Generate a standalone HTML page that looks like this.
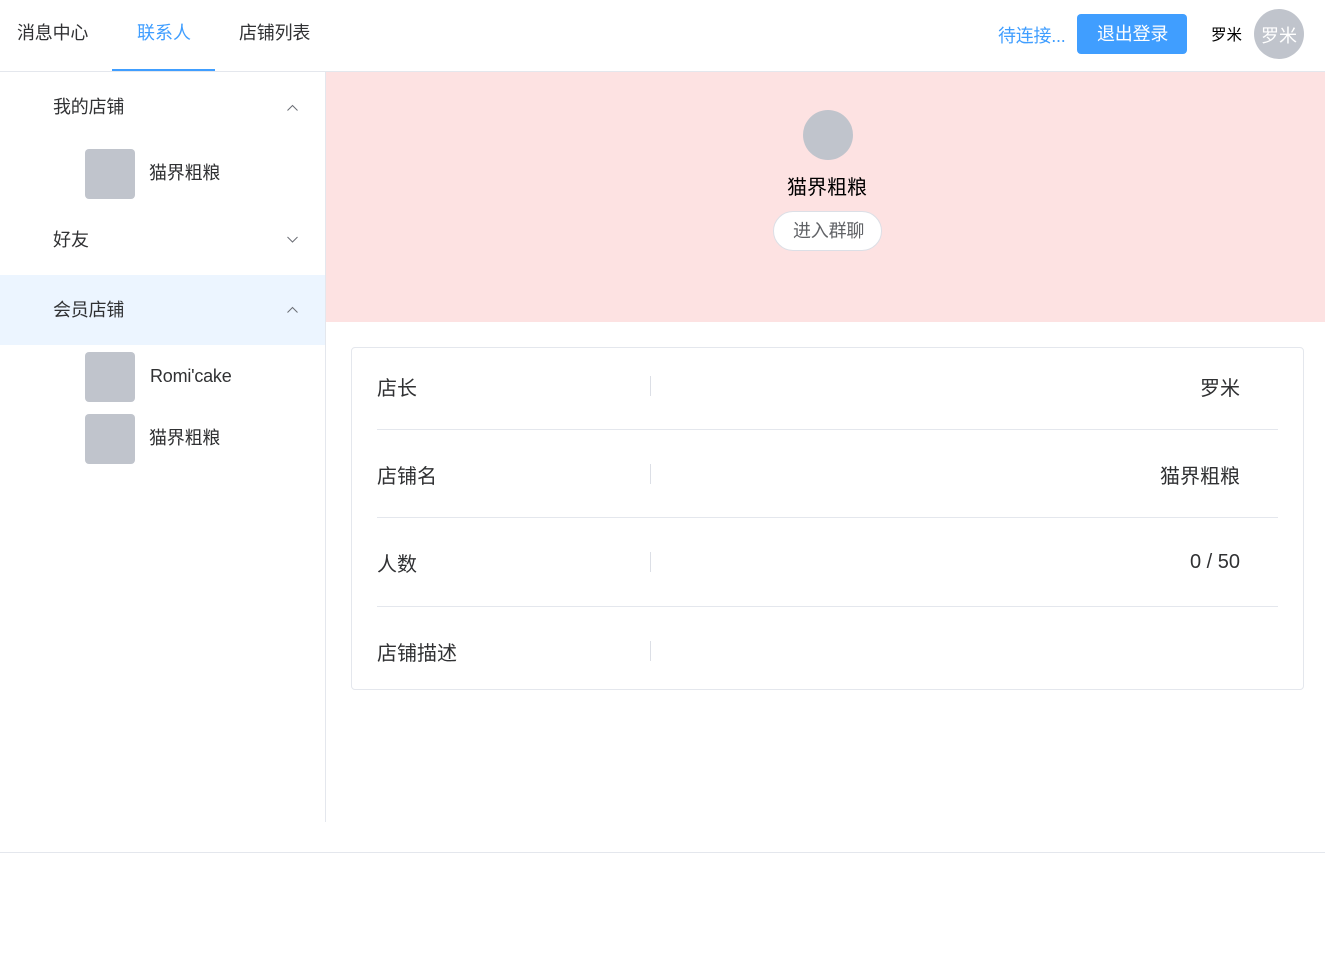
<!DOCTYPE html>
<html lang="zh-CN"><head><meta charset="utf-8"><title>店铺</title>
<style>
html,body{margin:0;padding:0;background:#fff}
body{width:1325px;height:978px;position:relative;overflow:hidden;font-family:"Liberation Sans","WenQuanYi Zen Hei","Noto Sans CJK SC",sans-serif;color:#303133}
div{position:absolute;box-sizing:border-box}
.t{white-space:nowrap;font-size:18px;line-height:24px}
.b{font-size:20px;line-height:28px;white-space:nowrap}
.g{background:#c0c4cc;border-radius:4px;width:50px;height:50px;left:85px}
.l{height:1px;background:#e4e7ed;left:377px;width:901px}
.v{width:1px;height:20px;left:650px;background:#dcdfe6}
.r{right:85px;text-align:right}
</style></head><body>
<div class="t" style="left:17px;top:21px;letter-spacing:-.2px">消息中心</div>
<div class="t" style="left:137px;top:21px;color:#409eff">联系人</div>
<div class="t" style="left:239px;top:21px;letter-spacing:-.2px">店铺列表</div>
<div style="left:112px;top:69px;width:103px;height:2px;background:#409eff"></div>
<div style="left:0;top:71px;width:1325px;height:1px;background:#e4e7ed"></div>
<div class="t" style="left:998px;top:24px;color:#409eff;letter-spacing:-.25px">待连接...</div>
<div style="left:1077px;top:14px;width:110px;height:40px;background:#409eff;border-radius:4px"></div>
<div class="t" style="left:1097px;top:22px;color:#fff;letter-spacing:-.2px">退出登录</div>
<div class="t" style="left:1211px;top:24px;font-size:15.5px;color:#000">罗米</div>
<div style="left:1254px;top:9px;width:50px;height:50px;border-radius:50%;background:#c0c4cc"></div>
<div class="t" style="left:1261px;top:24px;color:#fff">罗米</div>

<div style="left:325px;top:72px;width:1px;height:750px;background:#e4e7ed"></div>
<div class="t" style="left:53px;top:95px;letter-spacing:-.2px">我的店铺</div>
<svg style="position:absolute;left:286px;top:103px" width="14" height="10" viewBox="0 0 14 10"><path d="M1.5 7.5 L6.5 2.5 L11.5 7.5" fill="none" stroke="#6b6e75" stroke-width="1"/></svg>
<div class="g" style="top:149px"></div>
<div class="t" style="left:149px;top:161px;letter-spacing:-.2px">猫界粗粮</div>
<div class="t" style="left:53px;top:228px">好友</div>
<svg style="position:absolute;left:286px;top:235px" width="14" height="10" viewBox="0 0 14 10"><path d="M1.5 2 L6.5 7 L11.5 2" fill="none" stroke="#6b6e75" stroke-width="1"/></svg>
<div style="left:0;top:275px;width:325px;height:70px;background:#ecf5ff"></div>
<div class="t" style="left:53px;top:298px;letter-spacing:-.2px">会员店铺</div>
<svg style="position:absolute;left:286px;top:305px" width="14" height="10" viewBox="0 0 14 10"><path d="M1.5 7.5 L6.5 2.5 L11.5 7.5" fill="none" stroke="#6b6e75" stroke-width="1"/></svg>
<div class="g" style="top:352px"></div>
<div class="t" style="left:150px;top:364px;letter-spacing:-.22px">Romi'cake</div>
<div class="g" style="top:414px"></div>
<div class="t" style="left:149px;top:426px;letter-spacing:-.2px">猫界粗粮</div>

<div style="left:326px;top:72px;width:999px;height:250px;background:#fde2e2"></div>
<div style="left:803px;top:110px;width:50px;height:50px;border-radius:50%;background:#c0c4cc"></div>
<div class="b" style="left:787px;top:174px;color:#000">猫界粗粮</div>
<div style="left:773px;top:211px;width:109px;height:40px;border-radius:20px;background:#fff;border:1px solid #dcdfe6"></div>
<div class="t" style="left:793px;top:219px;color:#606266;letter-spacing:-.2px">进入群聊</div>

<div style="left:351px;top:347px;width:953px;height:343px;border:1px solid #e4e7ed;border-radius:4px;background:#fff"></div>
<div class="b" style="left:377px;top:375px">店长</div>
<div class="v" style="top:376px"></div>
<div class="b r" style="top:375px">罗米</div>
<div class="l" style="top:429px"></div>
<div class="b" style="left:377px;top:463px">店铺名</div>
<div class="v" style="top:464px"></div>
<div class="b r" style="top:463px">猫界粗粮</div>
<div class="l" style="top:517px"></div>
<div class="b" style="left:377px;top:551px">人数</div>
<div class="v" style="top:552px"></div>
<div class="b r" style="top:548px">0 / 50</div>
<div class="l" style="top:606px"></div>
<div class="b" style="left:377px;top:640px">店铺描述</div>
<div class="v" style="top:641px"></div>

<div style="left:0;top:852px;width:1325px;height:1px;background:#e4e7ed"></div>
</body></html>
